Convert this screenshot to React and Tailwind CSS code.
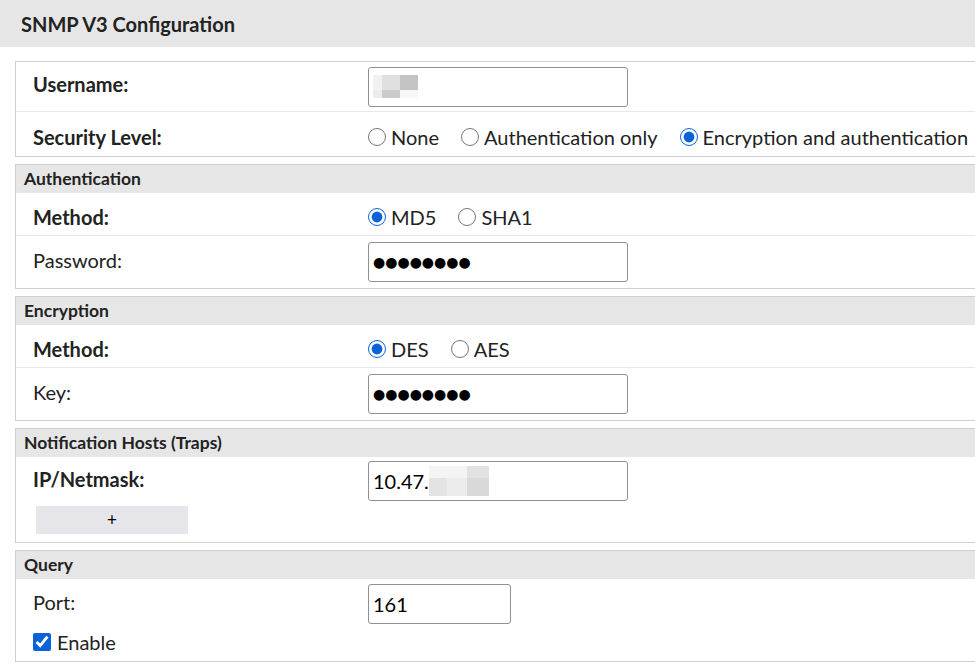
import React from "react";

const Radio = ({ label, checked }) => (
	<label className="flex items-center gap-[5px] mr-[22px] shrink-0 whitespace-nowrap">
		<input type="radio" readOnly checked={checked} className="m-0 w-[18px] h-[18px] accent-[#0b63d9]" />
		<span>{label}</span>
	</label>
);

const Field = ({ value, width = "w-[260px]", children }) => (
	<div className={`${width} h-[40px] border border-[#8f8f94] rounded-[3px] bg-white flex items-center px-[4px] text-[20px] text-black`}>
		{value}
		{children}
	</div>
);

const Dots = () => (
	<span className="text-[14px] text-black" style={{ fontFamily: "'DejaVu Sans', sans-serif" }}>●●●●●●●●</span>
);

// radio rows sit a little low in the original, input rows a little high
const Row = ({ label, bold, children, last, radios, h = "h-[50px]" }) => (
	<div className={`flex items-center ${h} ${radios ? "pt-[5px]" : ""} ${last ? "" : "border-b border-[#e8e8e8]"}`}>
		<div className={`w-[352px] shrink-0 pl-[17px] whitespace-nowrap ${radios ? "" : "pb-[5px]"} ${bold ? "font-bold" : ""}`}>{label}</div>
		<div className="flex items-center">{children}</div>
	</div>
);

const Section = ({ title, children }) => (
	<div className="ml-[15px] mt-[7px] border border-r-0 border-[#cfcfcf]">
		{title && <div className="h-[28px] bg-[#e6e6e6] pl-[8px] flex items-center text-[17.5px] font-bold">{title}</div>}
		{children}
	</div>
);

const App = () => {
	return (
		<div className="w-[975px] h-[669px] bg-white text-[20px] text-[#222] overflow-hidden" style={{ fontFamily: "Lato, 'Liberation Sans', sans-serif" }}>
			{/* Title bar */}
			<div className="h-[47px] bg-[#e6e6e6] pl-[21px] flex items-center text-[20px] font-bold">SNMP V3 Configuration</div>

			<div className="pt-[14px]">
				<div className="ml-[15px] border border-r-0 border-[#cfcfcf]">
					<Row label="Username:" bold>
						<Field>
							<span className="grid grid-cols-[9px_18px_18px] grid-rows-[15px_8px]">
								<span className="bg-[#f1f1f1]" />
								<span className="bg-[#e0e0e0]" />
								<span className="bg-[#c4c4c4]" />
								<span className="bg-[#ececec]" />
								<span className="bg-[#cbcbcb]" />
								<span className="bg-[#f7f7f7]" />
							</span>
						</Field>
					</Row>
					<Row label="Security Level:" bold last radios h="h-[44px]">
						<Radio label="None" />
						<Radio label="Authentication only" />
						<Radio label="Encryption and authentication" checked />
					</Row>
				</div>

				<Section title="Authentication">
					<Row label="Method:" bold radios h="h-[43px]">
						<Radio label="MD5" checked />
						<Radio label="SHA1" />
					</Row>
					<Row label="Password:" last h="h-[52px]">
						<Field><Dots /></Field>
					</Row>
				</Section>

				<Section title="Encryption">
					<Row label="Method:" bold radios h="h-[43px]">
						<Radio label="DES" checked />
						<Radio label="AES" />
					</Row>
					<Row label="Key:" last h="h-[52px]">
						<Field><Dots /></Field>
					</Row>
				</Section>

				<Section title="Notification Hosts (Traps)">
					<Row label="IP/Netmask:" bold last h="h-[48px]">
						<Field>
							10.47.
							<span className="grid grid-cols-[18px_20px_22px] grid-rows-[12px_18px]">
								<span className="bg-[#f4f4f4]" />
								<span className="bg-[#f4f4f4]" />
								<span className="bg-[#e2e2e2]" />
								<span className="bg-[#e3e3e3]" />
								<span className="bg-[#ececec]" />
								<span className="bg-[#d9d9d9]" />
							</span>
						</Field>
					</Row>
					<div className="pl-[20px] pt-[1px] pb-[8px]">
						<div className="w-[152px] h-[28px] bg-[#e6e6ea] flex items-center justify-center text-[17px] text-black">+</div>
					</div>
				</Section>

				<Section title="Query">
					<Row label="Port:" last h="h-[50px]">
						<Field value="161" width="w-[143px]" />
					</Row>
					<div className="flex items-center gap-[6px] pl-[17px] h-[25px] mb-[7px]">
						<input type="checkbox" readOnly checked className="m-0 w-[18px] h-[18px] accent-[#0b63d9]" />
						<span>Enable</span>
					</div>
				</Section>
			</div>
		</div>
	);
};

export default App;
